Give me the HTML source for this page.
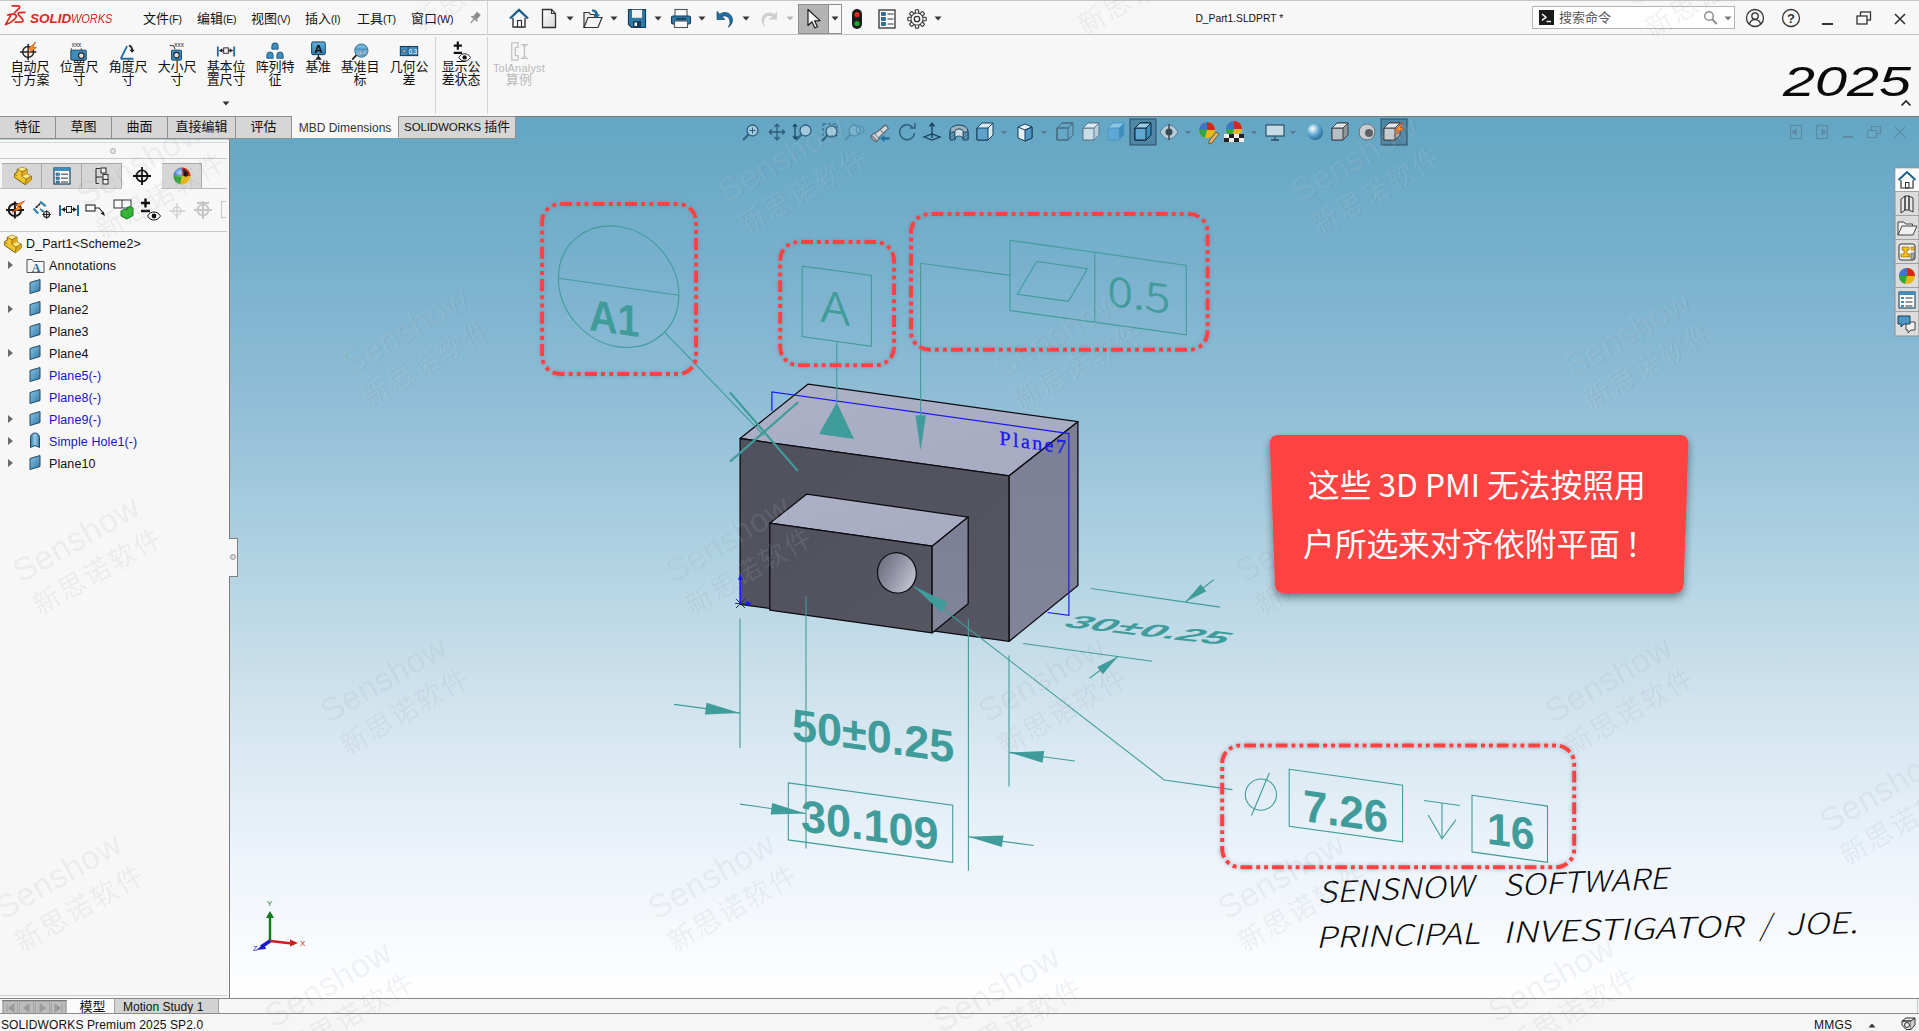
<!DOCTYPE html>
<html lang="zh-CN">
<head>
<meta charset="utf-8">
<title>D_Part1.SLDPRT - SOLIDWORKS Premium 2025</title>
<style>
*{box-sizing:border-box;margin:0;padding:0}
html,body{width:1919px;height:1031px;overflow:hidden;background:#f7f7f7}
body{position:relative;font-family:"Liberation Sans","Noto Sans CJK SC",sans-serif;font-size:12px;color:#111}
.abs{position:absolute}
.t{position:absolute;white-space:nowrap;line-height:1}
#titlebar{position:absolute;left:0;top:0;width:1919px;height:35px;background:#f7f7f7;border-top:1px solid #c6c6c6;border-bottom:1px solid #c2c2c2}
#ribbon{position:absolute;left:0;top:35px;width:1919px;height:81px;background:#f7f7f7}
.menu{position:absolute;top:11px;font-size:13px;line-height:14px;white-space:nowrap;color:#111}
.menu small{font-size:10.5px;letter-spacing:-0.2px}
.rb{position:absolute;top:60px;width:60px;margin-left:-30px;text-align:center;font-size:13px;line-height:13.4px;color:#111;letter-spacing:-0.2px}
.rb.dis{color:#b9b9b9}
.vsep{position:absolute;width:1px;background:#d2d2d2}
#tabs{position:absolute;left:0;top:116px;height:23px;width:516px;z-index:2}
.tab{position:absolute;top:0;height:23px;background:#d6d6d6;border:1px solid #8e8e8e;border-left:none;font-size:13px;line-height:20px;text-align:center;color:#111;white-space:nowrap}
.tab.act{background:#f8f8f8;border-color:#f8f8f8;border-right:1px solid #8e8e8e;font-size:12px;color:#333;line-height:23px;height:22px}
#lp{position:absolute;left:0;top:138px;width:230px;height:860px;background:#f7f7f7;border-right:1px solid #7e7e7e}
.hl{position:absolute;height:1px;background:#c9c9c9}
.ptab{position:absolute;top:25px;width:40px;height:26px;background:#d6d6d6;border:1px solid #a9a9a9;border-left:none}
.ptab.act{background:#fafafa;border-color:#fafafa}
.tree{position:absolute;left:49px;font-size:12.5px;line-height:14px;white-space:nowrap;color:#111;letter-spacing:0.1px;margin-top:1px}
.tree.bl{color:#1a10c8}
.exp{position:absolute;left:8px;width:0;height:0;border-left:5px solid #6a6a6a;border-top:4px solid transparent;border-bottom:4px solid transparent}
#vp{position:absolute;left:230px;top:116px;width:1689px;height:882px;background:linear-gradient(to bottom,#64a6c4 0%,#69a9c6 4.3%,#79b1cd 17%,#90bed6 32.2%,#afd1e2 49.3%,#d0e3ed 66.3%,#ecf3fa 83.3%,#ffffff 100%);border-top:1px solid #7b7977}
#bot{position:absolute;left:0;top:998px;width:1919px;height:33px;background:#f6f6f6;border-top:1px solid #868686}
#status{position:absolute;left:0;top:1013px;width:1919px;height:18px;background:#f6f6f6;border-top:1px solid #8c8c8c}
.wm{position:absolute;white-space:nowrap;color:rgba(255,255,255,.1);text-shadow:.9px .9px 0 rgba(40,60,80,.085);transform-origin:0 0;transform:rotate(-30deg);line-height:1;pointer-events:none}
.wm b{display:block;font:normal 400 33px/1 "Liberation Sans",sans-serif;letter-spacing:.6px}
.wm i{display:block;font:normal 400 27px/1 "Noto Sans CJK SC",sans-serif;margin:7px 0 0 0;letter-spacing:2px}
</style>
</head>
<body>

<div id="vp"></div>
<div id="titlebar">
<svg class="abs" style="left:0px;top:0px" width="30" height="34" viewBox="0 0 30 34" ><g fill="none" stroke="#da291c" stroke-width="1.7" stroke-linecap="round" stroke-linejoin="round"><path d="M12.200 4.800L18.300 4.800Q20.600 5.200 19.200 7.200L14.400 12"/><path d="M7.600 14Q12 12.600 15 13.400Q17.600 14.800 15 17.800Q11 22.200 5.500 23.600L10.800 14.400"/><path d="M24.800 11.400L19.600 11.700Q17.300 12.200 18.800 14.200L22.500 18.200Q24 20.500 21.500 21L15.200 21.200"/></g></svg>
<div class="t" style="left:30px;top:10.5px;font-size:13.5px;color:#da291c;font-style:italic;font-weight:700">SOLID</div>
<div class="t" style="left:71px;top:10.5px;font-size:13.5px;color:#da291c;font-style:italic;font-weight:400;transform:scaleX(.81);transform-origin:0 0">WORKS</div>
<div class="menu" style="left:143px">文件<small>(F)</small></div>
<div class="menu" style="left:197px">编辑<small>(E)</small></div>
<div class="menu" style="left:251px">视图<small>(V)</small></div>
<div class="menu" style="left:305px">插入<small>(I)</small></div>
<div class="menu" style="left:357px">工具<small>(T)</small></div>
<div class="menu" style="left:411px">窗口<small>(W)</small></div>
<svg class="abs" style="left:468px;top:10px" width="14" height="14" viewBox="0 0 14 14" ><g transform="rotate(40 7 7)" fill="#8a8a8a"><rect x="4.5" y="1" width="5" height="6"/><rect x="3" y="7" width="8" height="1.6"/><rect x="6.4" y="8.6" width="1.2" height="5"/></g></svg>
<div class="vsep" style="left:487px;top:0;height:34px"></div>
<svg class="abs" style="left:508px;top:6px" width="22" height="22" viewBox="0 0 22 22" ><path d="M2 11.5 L11 3 L20 11.5" fill="none" stroke="#1d5f8a" stroke-width="2.4" stroke-linejoin="miter"/><path d="M5 11v9h12v-9" fill="#fff" stroke="#333" stroke-width="1.4"/><rect x="9.5" y="13.5" width="4" height="6.5" fill="#fff" stroke="#333" stroke-width="1.2"/></svg>
<svg class="abs" style="left:540px;top:7px" width="18" height="21" viewBox="0 0 18 21" ><defs><linearGradient id="gdoc" x1="0" y1="0" x2="1" y2="1"><stop offset="0" stop-color="#fff"/><stop offset="1" stop-color="#d8d8d8"/></linearGradient></defs><path d="M2.5 1.5h9l4 4v14h-13z" fill="url(#gdoc)" stroke="#333" stroke-width="1.3"/><path d="M11.5 1.5v4h4" fill="none" stroke="#333" stroke-width="1.1"/></svg>
<svg class="abs" style="left:566px;top:15px" width="8" height="5" viewBox="0 0 8 5"><path d="M0.5 0.5h7L4 4.5z" fill="#333"/></svg>
<svg class="abs" style="left:582px;top:7px" width="22" height="21" viewBox="0 0 22 21" ><path d="M2 19.5V4.5h5l1.5 2h4.5v3" fill="#ececec" stroke="#333" stroke-width="1.2"/><path d="M2 19.5 L6 9.5 H20 L16 19.5 Z" fill="#f4f4f4" stroke="#333" stroke-width="1.2"/><path d="M10 1.5c4 0 6 2 6 5h2.2l-3.6 4-3.6-4h2.2c0-1.6-1-2.8-3.2-3z" fill="#1d6a9a"/></svg>
<svg class="abs" style="left:610px;top:15px" width="8" height="5" viewBox="0 0 8 5"><path d="M0.5 0.5h7L4 4.5z" fill="#333"/></svg>
<svg class="abs" style="left:627px;top:7px" width="20" height="21" viewBox="0 0 20 21" ><path d="M1.5 1.5h17v18h-14l-3-3z" fill="#2f79a8" stroke="#173e58" stroke-width="1.2"/><rect x="5" y="1.8" width="10" height="8" fill="#f2f2f2"/><rect x="6" y="13" width="8" height="6.2" fill="#173e58"/><rect x="7.5" y="14.5" width="2.5" height="3.5" fill="#f2f2f2"/></svg>
<svg class="abs" style="left:654px;top:15px" width="8" height="5" viewBox="0 0 8 5"><path d="M0.5 0.5h7L4 4.5z" fill="#333"/></svg>
<svg class="abs" style="left:670px;top:7px" width="22" height="21" viewBox="0 0 22 21" ><rect x="5" y="1.5" width="12" height="7" fill="#fafafa" stroke="#555" stroke-width="1.1"/><rect x="1.5" y="8" width="19" height="8" rx="1.5" fill="#2f79a8" stroke="#173e58" stroke-width="1.1"/><rect x="4.5" y="13" width="13" height="6.5" fill="#fafafa" stroke="#555" stroke-width="1.1"/><rect x="6" y="10" width="10" height="1.6" fill="#173e58"/></svg>
<svg class="abs" style="left:698px;top:15px" width="8" height="5" viewBox="0 0 8 5"><path d="M0.5 0.5h7L4 4.5z" fill="#333"/></svg>
<svg class="abs" style="left:714px;top:8px" width="22" height="20" viewBox="0 0 22 20" ><path d="M3 2.5v8h8l-3.2-3c3.6-1.6 7.8 0 8.2 5.2 0.2 2.2-0.8 4.2-2 5.6 4.2-2.2 5.6-7.2 3.6-10.8C15.4 3.4 10 2.2 5.8 5.2z" fill="#1f6fa3" stroke="#14405e" stroke-width=".7"/></svg>
<svg class="abs" style="left:742px;top:15px" width="8" height="5" viewBox="0 0 8 5"><path d="M0.5 0.5h7L4 4.5z" fill="#333"/></svg>
<svg class="abs" style="left:758px;top:8px" width="22" height="20" viewBox="0 0 22 20" ><g transform="translate(22 0) scale(-1 1)"><path d="M3 2.5v8h8l-3.2-3c3.6-1.6 7.8 0 8.2 5.2 0.2 2.2-0.8 4.2-2 5.6 4.2-2.2 5.6-7.2 3.6-10.8C15.4 3.4 10 2.2 5.8 5.2z" fill="#cfcfcf"/></g></svg>
<svg class="abs" style="left:786px;top:15px" width="8" height="5" viewBox="0 0 8 5"><path d="M0.5 0.5h7L4 4.5z" fill="#b5b5b5"/></svg>
<div class="abs" style="left:798px;top:3px;width:44px;height:30px;border:1px solid #8f8f8f;background:#f7f7f7"></div>
<div class="abs" style="left:798px;top:3px;width:31px;height:30px;border:1px solid #8f8f8f;background:#b3b3b3"></div>
<svg class="abs" style="left:806px;top:7px" width="16" height="22" viewBox="0 0 16 22" ><path d="M2 1.5 L2 17.5 L6 13.8 L8.8 20 L11.4 18.8 L8.6 12.8 L14 12.6 Z" fill="#fdfdfd" stroke="#1a1a1a" stroke-width="1.2" stroke-linejoin="round"/></svg>
<svg class="abs" style="left:831px;top:15px" width="8" height="5" viewBox="0 0 8 5"><path d="M0.5 0.5h7L4 4.5z" fill="#333"/></svg>
<svg class="abs" style="left:851px;top:7px" width="12" height="22" viewBox="0 0 12 22" ><rect x="1" y="1" width="10" height="20" rx="5" fill="#1c1c1c"/><circle cx="6" cy="6.5" r="2.6" fill="#e02a1c"/><circle cx="6" cy="15.5" r="2.6" fill="#25a52c"/></svg>
<svg class="abs" style="left:878px;top:8px" width="18" height="20" viewBox="0 0 18 20" ><rect x="1" y="1" width="16" height="18" fill="#fbfbfb" stroke="#333" stroke-width="1.3"/><g fill="#1f6fa3" stroke="#14405e" stroke-width=".6"><rect x="3.5" y="3.5" width="4" height="3"/><rect x="3.5" y="8.5" width="4" height="3"/><rect x="3.5" y="13.5" width="4" height="3"/></g><g stroke="#333" stroke-width="1.2"><path d="M9.5 5h6M9.5 10h6M9.5 15h6"/></g></svg>
<svg class="abs" style="left:907px;top:8px" width="20" height="20" viewBox="0 0 20 20" ><g transform="translate(10 10)"><circle r="6.2" fill="none" stroke="#333" stroke-width="1.3"/><circle r="2.7" fill="none" stroke="#333" stroke-width="1.3"/><rect x="-1.7" y="-9.2" width="3.4" height="3.4" rx=".8" fill="#f7f7f7" stroke="#333" stroke-width="1.1" transform="rotate(0)"/><rect x="-1.7" y="-9.2" width="3.4" height="3.4" rx=".8" fill="#f7f7f7" stroke="#333" stroke-width="1.1" transform="rotate(45)"/><rect x="-1.7" y="-9.2" width="3.4" height="3.4" rx=".8" fill="#f7f7f7" stroke="#333" stroke-width="1.1" transform="rotate(90)"/><rect x="-1.7" y="-9.2" width="3.4" height="3.4" rx=".8" fill="#f7f7f7" stroke="#333" stroke-width="1.1" transform="rotate(135)"/><rect x="-1.7" y="-9.2" width="3.4" height="3.4" rx=".8" fill="#f7f7f7" stroke="#333" stroke-width="1.1" transform="rotate(180)"/><rect x="-1.7" y="-9.2" width="3.4" height="3.4" rx=".8" fill="#f7f7f7" stroke="#333" stroke-width="1.1" transform="rotate(225)"/><rect x="-1.7" y="-9.2" width="3.4" height="3.4" rx=".8" fill="#f7f7f7" stroke="#333" stroke-width="1.1" transform="rotate(270)"/><rect x="-1.7" y="-9.2" width="3.4" height="3.4" rx=".8" fill="#f7f7f7" stroke="#333" stroke-width="1.1" transform="rotate(315)"/><circle r="5.5" fill="#f7f7f7"/><circle r="2.7" fill="none" stroke="#333" stroke-width="1.3"/></g></svg>
<svg class="abs" style="left:934px;top:15px" width="8" height="5" viewBox="0 0 8 5"><path d="M0.5 0.5h7L4 4.5z" fill="#333"/></svg>
<div class="t" style="left:1195.4px;top:12.5px;font-size:10.3px;color:#111">D_Part1.SLDPRT *</div>
<div class="abs" style="left:1532px;top:5px;width:203px;height:23px;background:#fff;border:1px solid #b4b4b4"></div>
<svg class="abs" style="left:1539px;top:9px" width="15" height="15" viewBox="0 0 15 15" ><rect width="15" height="15" fill="#1b1b1b"/><path d="M3 4l4 3.2L3 10.4" fill="none" stroke="#fff" stroke-width="1.4"/><path d="M7.5 11.5h4.5" stroke="#fff" stroke-width="1.4"/></svg>
<div class="t" style="left:1559px;top:10px;font-size:13px;color:#5a5a5a">搜索命令</div>
<svg class="abs" style="left:1703px;top:9px" width="16" height="16" viewBox="0 0 16 16" ><circle cx="6" cy="6" r="4.3" fill="none" stroke="#8e8e8e" stroke-width="1.5"/><path d="M9.2 9.2l4.6 4.8" stroke="#8e8e8e" stroke-width="2"/></svg>
<svg class="abs" style="left:1724px;top:15px" width="8" height="5" viewBox="0 0 8 5"><path d="M0.5 0.5h7L4 4.5z" fill="#777"/></svg>
<svg class="abs" style="left:1745px;top:7px" width="20" height="20" viewBox="0 0 20 20" ><circle cx="10" cy="10" r="8.5" fill="none" stroke="#333" stroke-width="1.3"/><circle cx="10" cy="8" r="3.2" fill="none" stroke="#333" stroke-width="1.3"/><path d="M4.4 16c.8-3 3-4.4 5.6-4.4s4.8 1.400 5.600 4.400" fill="none" stroke="#333" stroke-width="1.3"/></svg>
<svg class="abs" style="left:1781px;top:7px" width="20" height="20" viewBox="0 0 20 20" ><circle cx="10" cy="10" r="8.5" fill="none" stroke="#333" stroke-width="1.3"/><text x="10" y="14.6" text-anchor="middle" font-family="Liberation Sans,sans-serif" font-size="13" font-weight="700" fill="#333">?</text></svg>
<div class="abs" style="left:1822px;top:22px;width:11px;height:2px;background:#333"></div>
<svg class="abs" style="left:1856px;top:10px" width="16" height="14" viewBox="0 0 16 14" ><rect x="4.500" y="1" width="10" height="8" fill="none" stroke="#333" stroke-width="1.300"/><rect x="1" y="5" width="10" height="8" fill="#f7f7f7" stroke="#333" stroke-width="1.300"/></svg>
<svg class="abs" style="left:1894px;top:12px" width="12" height="12" viewBox="0 0 12 12" ><path d="M1 1l10 10M11 1L1 11" stroke="#333" stroke-width="1.600"/></svg>
</div>
<div id="ribbon">
<div class="vsep" style="left:435px;top:2px;height:77px"></div>
<div class="vsep" style="left:487px;top:2px;height:77px"></div>
</div>
<svg class="abs" style="left:20px;top:40.5px" width="20" height="21" viewBox="0 0 22 23" ><circle cx="9" cy="12" r="6" fill="none" stroke="#222" stroke-width="1.6"/><path d="M9 3v18M0 12h18" stroke="#222" stroke-width="1.600"/><path d="M17 1l-8 8h4l-5 6 10-8h-4z" fill="#f7a21a" stroke="#d4411a" stroke-width=".8"/></svg>
<svg class="abs" style="left:69px;top:40.5px" width="20" height="21" viewBox="0 0 22 23" ><text x="3" y="6" font-size="7" font-family="Liberation Sans,sans-serif" fill="#222">xxx</text><path d="M2.500 8v6M13.500 8v8" stroke="#222" stroke-width="1"/><rect x="2" y="10" width="17" height="11" rx="1" fill="#3d8dbd" stroke="#14405e" stroke-width="1"/><circle cx="13.500" cy="16" r="3" fill="#e8e8e8" stroke="#222" stroke-width="1.200"/></svg>
<svg class="abs" style="left:118px;top:40.5px" width="20" height="21" viewBox="0 0 22 23" ><path d="M3 19.500L10 5.500M3 19.500h14" fill="none" stroke="#1f6f9f" stroke-width="2"/><path d="M12 4c3 .5 4.500 2.500 4.500 5.500h2l-3 3.500-3-3.500h2c0-1.500-.8-2.800-2.500-3.500z" fill="#222"/></svg>
<svg class="abs" style="left:167px;top:40.5px" width="20" height="21" viewBox="0 0 22 23" ><text x="8" y="6" font-size="7" font-family="Liberation Sans,sans-serif" fill="#222">xxx</text><path d="M3 5h4l2 4" fill="none" stroke="#222" stroke-width="1"/><rect x="5" y="10" width="11" height="11" rx="1" fill="#3d8dbd" stroke="#14405e" stroke-width="1"/><circle cx="10.500" cy="15.500" r="3" fill="#e0e0e0" stroke="#222" stroke-width="1.200"/></svg>
<svg class="abs" style="left:216px;top:40.5px" width="20" height="21" viewBox="0 0 22 23" ><path d="M2 6v11M20 6v11" stroke="#1f6f9f" stroke-width="2"/><path d="M3.500 10.500h15" stroke="#222" stroke-width="1.200"/><path d="M3.500 10.500l3.500-2.500v5zM18.500 10.500l-3.500-2.500v5z" fill="#222"/><rect x="8.500" y="7.500" width="5" height="6" fill="#f0f0f0" stroke="#222" stroke-width="1"/></svg>
<svg class="abs" style="left:265px;top:40.5px" width="20" height="21" viewBox="0 0 22 23" ><g fill="#3d8dbd" stroke="#14405e" stroke-width=".8"><path d="M7.500 9v-3.500a3.500 3.500 0 0 1 7 0V9z"/><path d="M2 19v-3.500a3.500 3.500 0 0 1 7 0V19z"/><path d="M13 19v-3.500a3.500 3.500 0 0 1 7 0V19z"/></g></svg>
<svg class="abs" style="left:308px;top:40.5px" width="20" height="21" viewBox="0 0 22 23" ><defs><linearGradient id="gA" x1="0" y1="0" x2="0" y2="1"><stop offset="0" stop-color="#62b0dc"/><stop offset="1" stop-color="#2f83b4"/></linearGradient></defs><rect x="4" y="1" width="15" height="14" rx="1.500" fill="url(#gA)" stroke="#14405e" stroke-width="1.100"/><text x="11.500" y="13" text-anchor="middle" font-size="13" font-weight="700" font-family="Liberation Sans,sans-serif" fill="#111">A</text><path d="M11.500 15v1.500" stroke="#222" stroke-width="1.200"/><path d="M7.800 20.500l3.700-4.500 3.700 4.500z" fill="#222"/></svg>
<svg class="abs" style="left:350px;top:40.5px" width="20" height="21" viewBox="0 0 22 23" ><circle cx="12.500" cy="10.500" r="7.300" fill="#6cb2da" stroke="#2a6c94" stroke-width="1"/><path d="M5.500 9h14" stroke="#2a6c94" stroke-width=".7"/><text x="12.500" y="15.500" text-anchor="middle" font-size="7.500" font-weight="700" font-family="Liberation Sans,sans-serif" fill="#fff" stroke="#173e58" stroke-width=".3">A1</text><path d="M7 15.500l-4.500 5" stroke="#222" stroke-width="2"/></svg>
<svg class="abs" style="left:399px;top:40.5px" width="20" height="21" viewBox="0 0 22 23" ><rect x="1.500" y="6" width="19" height="10" fill="#3d8dbd" stroke="#14405e" stroke-width="1.200"/><path d="M10 6v10" stroke="#14405e" stroke-width="1"/><path d="M3.500 12a2.200 2.200 0 0 1 4.400 0z" fill="#e8e8e8" stroke="#222" stroke-width=".6"/><text x="15.300" y="14" text-anchor="middle" font-size="7" font-family="Liberation Sans,sans-serif" fill="#fff">0.3</text></svg>
<svg class="abs" style="left:451px;top:40.5px" width="20" height="21" viewBox="0 0 22 23" ><path d="M3 5h9M7.500 .5v9M3 13h9" stroke="#111" stroke-width="2.400"/><path d="M8.500 18c2-3 4-4 6.500-4s4.500 1 6.500 4c-2 3-4 4-6.500 4s-4.500-1-6.500-4z" fill="#fff" stroke="#111" stroke-width="1"/><circle cx="15" cy="18" r="2.400" fill="#111"/></svg>
<svg class="abs" style="left:509px;top:40.5px" width="20" height="21" viewBox="0 0 22 23" ><g fill="none" stroke="#c4c4c4" stroke-width="1.500"><path d="M3 2h7v5h-3v9h3v5H3zM13 4h8M13 19h8M17 5v13"/></g><path d="M17 3l-2 3h4zM17 20l-2-3h4z" fill="#c4c4c4"/></svg>
<div class="rb" style="left:30px">自动尺<br>寸方案</div>
<div class="rb" style="left:79px">位置尺<br>寸</div>
<div class="rb" style="left:128px">角度尺<br>寸</div>
<div class="rb" style="left:177px">大小尺<br>寸</div>
<div class="rb" style="left:226px">基本位<br>置尺寸</div>
<div class="rb" style="left:275px">阵列特<br>征</div>
<div class="rb" style="left:318px">基准</div>
<div class="rb" style="left:360px">基准目<br>标</div>
<div class="rb" style="left:409px">几何公<br>差</div>
<div class="rb" style="left:461px">显示公<br>差状态</div>
<div class="rb dis" style="left:519px;top:62px;font-size:11px;line-height:12px;letter-spacing:.2px">TolAnalyst<br><span style="font-size:13px">算例</span></div>
<svg class="abs" style="left:222px;top:101px" width="8" height="5" viewBox="0 0 8 5"><path d="M0.5 0.5h7L4 4.5z" fill="#333"/></svg>
<svg class="abs" style="left:1775px;top:55px" width="144" height="50" viewBox="0 0 144 50" ><text x="8" y="41" font-family="Liberation Sans,sans-serif" font-style="italic" font-size="43" textLength="128" lengthAdjust="spacingAndGlyphs" fill="#0a0a0a">2025</text></svg>
<svg class="abs" style="left:1900px;top:99px" width="12" height="8" viewBox="0 0 12 8" ><path d="M1.500 6.500L6 2l4.500 4.500" fill="none" stroke="#222" stroke-width="1.600"/></svg>
<div id="tabs">
<div class="tab" style="left:0px;width:56px">特征</div>
<div class="tab" style="left:56px;width:56px">草图</div>
<div class="tab" style="left:112px;width:56px">曲面</div>
<div class="tab" style="left:168px;width:68px">直接编辑</div>
<div class="tab" style="left:236px;width:56px">评估</div>
<div class="tab act" style="left:292px;width:107px">MBD Dimensions</div>
<div class="tab" style="left:399px;width:117px;font-size:11.5px;letter-spacing:-.1px">SOLIDWORKS <span style="font-size:13px">插件</span></div>
</div>
<div id="lp">
<div class="hl" style="left:0;top:1px;width:229px;background:#b4ccd2"></div>
<div class="hl" style="left:0;top:4px;width:227px;background:#d4d4d4"></div>
<div class="abs" style="left:110px;top:10px;width:6px;height:6px;border-radius:50%;border:1px solid #b0b0b0;background:#e6e6e6"></div>
<div class="hl" style="left:0;top:20px;width:227px"></div>
<div class="ptab" style="left:2px"></div>
<div class="ptab" style="left:42px"></div>
<div class="ptab" style="left:82px"></div>
<div class="ptab act" style="left:122px"></div>
<div class="ptab" style="left:162px"></div>
<div class="hl" style="left:0;top:50px;width:227px;background:#bdbdbd"></div>
<div class="abs" style="left:122px;top:26px;width:39px;height:26px;background:#fafafa"></div>
<svg class="abs" style="left:14px;top:28px" width="20" height="20" viewBox="0 0 20 20" ><path d="M8.400 1.300L13 3.300V8L17.200 10V14L11.300 18.700L0.300 11.200V8L3.200 6.100V3.300z" fill="#f0c42c" stroke="#7a5c0c" stroke-width="1" stroke-linejoin="round"/><path d="M3.200 3.300L8.400 1.300L13 3.300L8 5.600z" fill="#fbe88a"/><path d="M8 10.500L13 8L17.200 10L12 13z" fill="#fbe88a"/><path d="M12 13L17.200 10V14L11.300 18.700z" fill="#dca81c"/><path d="M8 5.600L13 3.300V8L8 10.500z" fill="#dca81c"/><path d="M3.200 3.300L8 5.600V10.500L12 13L11.300 18.700M8 5.600L13 3.300M12 13L17.200 10M0.300 8L3.200 9.800" fill="none" stroke="#7a5c0c" stroke-width=".7"/></svg>
<svg class="abs" style="left:53px;top:29px" width="18" height="18" viewBox="0 0 18 18" ><rect x="1" y="1" width="16" height="16" fill="#fbfbfb" stroke="#14405e" stroke-width="1.200"/><rect x="1" y="1" width="16" height="3" fill="#3d8dbd"/><g fill="#3d8dbd" stroke="#14405e" stroke-width=".5"><rect x="3" y="6" width="3.500" height="2.500"/><rect x="3" y="10" width="3.500" height="2.500"/><rect x="3" y="14" width="3.500" height="2"/></g><path d="M8 7.200h7M8 11.200h7M8 15h7" stroke="#333" stroke-width="1"/></svg>
<svg class="abs" style="left:93px;top:29px" width="18" height="18" viewBox="0 0 18 18" ><g fill="#f4f4f4" stroke="#333" stroke-width="1.100"><path d="M3 1.500h4M3 1.500v15M3 16.500h3"/><rect x="8" y="1" width="5" height="5"/><rect x="10" y="7.500" width="5" height="5"/><rect x="10" y="12.500" width="5" height="4.500"/><path d="M3 10h7" /></g></svg>
<svg class="abs" style="left:132px;top:28px" width="20" height="20" viewBox="0 0 20 20" ><circle cx="10" cy="10" r="5.600" fill="none" stroke="#111" stroke-width="1.800"/><path d="M10 1v18M1 10h18" stroke="#111" stroke-width="1.800"/></svg>
<svg class="abs" style="left:172px;top:28px" width="20" height="20" viewBox="0 0 20 20" ><defs><radialGradient id="bg1" cx=".35" cy=".3" r=".8"><stop offset="0" stop-color="#fff" stop-opacity=".7"/><stop offset=".4" stop-color="#fff" stop-opacity="0"/></radialGradient></defs><circle cx="10" cy="10" r="8.500" fill="#e8b81a"/><path d="M10 10L1.500 10A8.500 8.500 0 0 1 10 1.500z" fill="#3a78d0"/><path d="M10 10V1.500A8.500 8.500 0 0 1 18.500 10z" fill="#d02a1a"/><path d="M10 10H1.500A8.500 8.500 0 0 0 8 18.300z" fill="#32a83a"/><ellipse cx="13" cy="7" rx="2.300" ry="4" fill="#111" transform="rotate(-30 13 7)"/><circle cx="10" cy="10" r="8.500" fill="url(#bg1)"/></svg>
<div class="hl" style="left:0;top:93px;width:227px"></div>
<svg class="abs" style="left:5px;top:61px" width="22" height="22" viewBox="0 0 22 22" ><circle cx="9.900" cy="10.900" r="6.200" fill="none" stroke="#1a1a1a" stroke-width="2"/><path d="M1 10.900h18M9.900 2.500v17" stroke="#1a1a1a" stroke-width="2"/><path d="M19.500 2L10.500 6.200L13.800 7.600L7 13.200L16.800 9.300L13.600 7.900z" fill="#f9b21a" stroke="#d8401a" stroke-width=".9" stroke-linejoin="round"/></svg>
<svg class="abs" style="left:31px;top:61px" width="22" height="22" viewBox="0 0 22 22" ><path d="M9 2.500L14.700 7.100M2.500 9.500L7.200 14.600" stroke="#2f7fae" stroke-width="2.200"/><path d="M5.200 8.300L8.800 5" stroke="#222" stroke-width="1.100"/><path d="M4.300 9.200l.7-2.600 1.700 1.800zM9.700 4.100l-2.500.8 1.700 1.800z" fill="#222"/><path d="M9 9.800l2.800 2.300" stroke="#2f7fae" stroke-width="1.600"/><path d="M13.400 13.400l-3.300-.6 2.200-2.400z" fill="#2f7fae"/><circle cx="15.600" cy="15.500" r="3" fill="none" stroke="#222" stroke-width="1.100"/><path d="M15.600 11.300v8.400M11.400 15.500h8.400" stroke="#222" stroke-width="1.100"/></svg>
<svg class="abs" style="left:58px;top:61px" width="22" height="22" viewBox="0 0 22 22" ><path d="M2 6v11M20 6v11" stroke="#1f6f9f" stroke-width="2"/><path d="M3.500 10.500h15" stroke="#222" stroke-width="1.200"/><path d="M3.500 10.500l3.500-2.500v5zM18.500 10.500l-3.500-2.500v5z" fill="#222"/><rect x="8.500" y="7.500" width="5" height="6" fill="#f0f0f0" stroke="#222" stroke-width="1"/></svg>
<svg class="abs" style="left:84px;top:61px" width="22" height="22" viewBox="0 0 22 22" ><rect x="2" y="6" width="9" height="6" fill="#fafafa" stroke="#222" stroke-width="1.100"/><path d="M11 9h4l5 6" fill="none" stroke="#222" stroke-width="1.100"/><path d="M21 17l-4.500-2.500 3-2z" fill="#222"/></svg>
<svg class="abs" style="left:112px;top:59px" width="24" height="24" viewBox="0 0 24 24" ><rect x="2" y="3" width="17" height="8" fill="#fafafa" stroke="#333" stroke-width="1"/><path d="M10 3v8" stroke="#333" stroke-width="1"/><path d="M9 14l4-2 2 1v-2.500l3-1 3 1.500v7.500l-6 3.500-6-3z" fill="#2fb52f" stroke="#14701a" stroke-width="1"/></svg>
<svg class="abs" style="left:139px;top:60px" width="24" height="24" viewBox="0 0 24 24" ><path d="M2 5h9M6.500 .5v9M2 13h9" stroke="#111" stroke-width="2.400"/><path d="M8.500 18c2-3 4-4 6.500-4s4.500 1 6.500 4c-2 3-4 4-6.500 4s-4.500-1-6.500-4z" fill="#fff" stroke="#111" stroke-width="1"/><circle cx="15" cy="18" r="2.400" fill="#111"/></svg>
<svg class="abs" style="left:167px;top:62px" width="20" height="20" viewBox="0 0 20 20" ><g stroke="#d0d0d0" fill="none" stroke-width="1.300"><circle cx="10" cy="11" r="4"/><path d="M10 3v16M2 11h16"/></g></svg>
<svg class="abs" style="left:192px;top:60px" width="22" height="22" viewBox="0 0 22 22" ><g stroke="#c6c6c6" fill="none" stroke-width="2"><circle cx="11" cy="12" r="5.500"/><path d="M11 3v18M2 12h18"/><path d="M5 5h12" /></g></svg>
<div class="abs" style="left:221px;top:63px;width:5px;height:17px;border:1.500px solid #c6c6c6;border-right:none"></div>
<div class="hl" style="left:0;top:857px;width:227px;background:#d0d0d0"></div>
<svg class="abs" style="left:4px;top:96px" width="20" height="20" viewBox="0 0 20 20" ><path d="M8.400 1.300L13 3.300V8L17.200 10V14L11.300 18.700L0.300 11.200V8L3.200 6.100V3.300z" fill="#f0c42c" stroke="#7a5c0c" stroke-width="1" stroke-linejoin="round"/><path d="M3.200 3.300L8.400 1.300L13 3.300L8 5.600z" fill="#fbe88a"/><path d="M8 10.500L13 8L17.200 10L12 13z" fill="#fbe88a"/><path d="M12 13L17.200 10V14L11.300 18.700z" fill="#dca81c"/><path d="M8 5.600L13 3.300V8L8 10.500z" fill="#dca81c"/><path d="M3.200 3.300L8 5.600V10.500L12 13L11.300 18.700M8 5.600L13 3.300M12 13L17.200 10M0.300 8L3.200 9.800" fill="none" stroke="#7a5c0c" stroke-width=".7"/></svg>
<div class="tree" style="left:26px;top:98px;letter-spacing:.1px">D_Part1&lt;Scheme2&gt;</div>
<div class="exp" style="top:123px"></div>
<svg class="abs" style="left:26px;top:118px" width="20" height="18" viewBox="0 0 20 18" ><path d="M1 16.500V3.500h5l1.500 2H18v11z" fill="#f4f4f4" stroke="#555" stroke-width="1"/><text x="10" y="15.500" text-anchor="middle" font-family="Liberation Serif,serif" font-weight="700" font-size="12" fill="#2a6c9c">A</text></svg>
<div class="tree" style="top:120px">Annotations</div>
<svg class="abs" style="left:28px;top:140px" width="14" height="17" viewBox="0 0 14 17" ><defs><linearGradient id="pg1" x1="0" y1="0" x2="1" y2="1"><stop offset="0" stop-color="#8cc4e4"/><stop offset="1" stop-color="#2f79a8"/></linearGradient></defs><path d="M2 4.500L12 1.500v11L2 15.500z" fill="url(#pg1)" stroke="#1b4a69" stroke-width="1"/></svg>
<div class="tree" style="top:142px">Plane1</div>
<div class="exp" style="top:167px"></div>
<svg class="abs" style="left:28px;top:162px" width="14" height="17" viewBox="0 0 14 17" ><defs><linearGradient id="pg2" x1="0" y1="0" x2="1" y2="1"><stop offset="0" stop-color="#8cc4e4"/><stop offset="1" stop-color="#2f79a8"/></linearGradient></defs><path d="M2 4.500L12 1.500v11L2 15.500z" fill="url(#pg2)" stroke="#1b4a69" stroke-width="1"/></svg>
<div class="tree" style="top:164px">Plane2</div>
<svg class="abs" style="left:28px;top:184px" width="14" height="17" viewBox="0 0 14 17" ><defs><linearGradient id="pg3" x1="0" y1="0" x2="1" y2="1"><stop offset="0" stop-color="#8cc4e4"/><stop offset="1" stop-color="#2f79a8"/></linearGradient></defs><path d="M2 4.500L12 1.500v11L2 15.500z" fill="url(#pg3)" stroke="#1b4a69" stroke-width="1"/></svg>
<div class="tree" style="top:186px">Plane3</div>
<div class="exp" style="top:211px"></div>
<svg class="abs" style="left:28px;top:206px" width="14" height="17" viewBox="0 0 14 17" ><defs><linearGradient id="pg4" x1="0" y1="0" x2="1" y2="1"><stop offset="0" stop-color="#8cc4e4"/><stop offset="1" stop-color="#2f79a8"/></linearGradient></defs><path d="M2 4.500L12 1.500v11L2 15.500z" fill="url(#pg4)" stroke="#1b4a69" stroke-width="1"/></svg>
<div class="tree" style="top:208px">Plane4</div>
<svg class="abs" style="left:28px;top:228px" width="14" height="17" viewBox="0 0 14 17" ><defs><linearGradient id="pg5" x1="0" y1="0" x2="1" y2="1"><stop offset="0" stop-color="#8cc4e4"/><stop offset="1" stop-color="#2f79a8"/></linearGradient></defs><path d="M2 4.500L12 1.500v11L2 15.500z" fill="url(#pg5)" stroke="#1b4a69" stroke-width="1"/></svg>
<div class="tree bl" style="top:230px">Plane5(-)</div>
<svg class="abs" style="left:28px;top:250px" width="14" height="17" viewBox="0 0 14 17" ><defs><linearGradient id="pg6" x1="0" y1="0" x2="1" y2="1"><stop offset="0" stop-color="#8cc4e4"/><stop offset="1" stop-color="#2f79a8"/></linearGradient></defs><path d="M2 4.500L12 1.500v11L2 15.500z" fill="url(#pg6)" stroke="#1b4a69" stroke-width="1"/></svg>
<div class="tree bl" style="top:252px">Plane8(-)</div>
<div class="exp" style="top:277px"></div>
<svg class="abs" style="left:28px;top:272px" width="14" height="17" viewBox="0 0 14 17" ><defs><linearGradient id="pg7" x1="0" y1="0" x2="1" y2="1"><stop offset="0" stop-color="#8cc4e4"/><stop offset="1" stop-color="#2f79a8"/></linearGradient></defs><path d="M2 4.500L12 1.500v11L2 15.500z" fill="url(#pg7)" stroke="#1b4a69" stroke-width="1"/></svg>
<div class="tree bl" style="top:274px">Plane9(-)</div>
<div class="exp" style="top:299px"></div>
<svg class="abs" style="left:28px;top:294px" width="14" height="17" viewBox="0 0 14 17" ><defs><linearGradient id="hg" x1="0" y1="0" x2="1" y2="0"><stop offset="0" stop-color="#2f79a8"/><stop offset=".5" stop-color="#9ccdea"/><stop offset="1" stop-color="#2f79a8"/></linearGradient></defs><path d="M2.500 15.500V5.500a4.500 4.500 0 0 1 9 0v10l-4.500-2z" fill="url(#hg)" stroke="#1b4a69" stroke-width="1"/></svg>
<div class="tree bl" style="top:296px">Simple Hole1(-)</div>
<div class="exp" style="top:321px"></div>
<svg class="abs" style="left:28px;top:316px" width="14" height="17" viewBox="0 0 14 17" ><defs><linearGradient id="pg9" x1="0" y1="0" x2="1" y2="1"><stop offset="0" stop-color="#8cc4e4"/><stop offset="1" stop-color="#2f79a8"/></linearGradient></defs><path d="M2 4.500L12 1.500v11L2 15.500z" fill="url(#pg9)" stroke="#1b4a69" stroke-width="1"/></svg>
<div class="tree" style="top:318px">Plane10</div>
</div>
<div class="abs" style="left:229px;top:538px;width:9px;height:39px;background:#f7f7f7;border:1px solid #808080;border-left:none"></div>
<div class="abs" style="left:230px;top:554px;width:6px;height:6px;border:1px solid #9a9a9a;background:#dcdcdc;border-radius:50%"></div>
<div id="bot">
<div class="abs" style="left:2px;top:1px;width:65px;height:15px;background:#b9b9b9;border-top:1px solid #7a7a7a"></div>
<div class="abs" style="left:3px;top:2px;width:15px;height:14px;border:1px solid #a6a6a6;background:#bcbcbc"></div>
<div class="abs" style="left:19px;top:2px;width:15px;height:14px;border:1px solid #a6a6a6;background:#bcbcbc"></div>
<div class="abs" style="left:35px;top:2px;width:15px;height:14px;border:1px solid #a6a6a6;background:#bcbcbc"></div>
<div class="abs" style="left:51px;top:2px;width:15px;height:14px;border:1px solid #a6a6a6;background:#bcbcbc"></div>
<svg class="abs" style="left:3px;top:2px" width="15" height="14" viewBox="0 0 15 14" ><path d="M4 3v8M11 3L5.500 7l5.500 4z" fill="#9a9a9a" stroke="#9a9a9a" stroke-width="1"/></svg>
<svg class="abs" style="left:19px;top:2px" width="15" height="14" viewBox="0 0 15 14" ><path d="M10 3L4.500 7l5.500 4z" fill="#9a9a9a" stroke="#9a9a9a" stroke-width="1"/></svg>
<svg class="abs" style="left:35px;top:2px" width="15" height="14" viewBox="0 0 15 14" ><path d="M5 3l5.500 4L5 11z" fill="#9a9a9a" stroke="#9a9a9a" stroke-width="1"/></svg>
<svg class="abs" style="left:51px;top:2px" width="15" height="14" viewBox="0 0 15 14" ><path d="M11 3v8M4 3l5.500 4L4 11z" fill="#9a9a9a" stroke="#9a9a9a" stroke-width="1"/></svg>
<div class="abs" style="left:67px;top:0;width:47px;height:16px;background:#fbfbfb;padding-left:12.5px;font-size:13px;line-height:16px">模型</div>
<div class="abs" style="left:114px;top:0;width:105px;height:16px;background:#d3d3d3;border:1px solid #a3a3a3;border-top:none;padding-left:8px;font-size:12px;line-height:16px;letter-spacing:.02px">Motion Study 1</div>
<div class="abs" style="left:1917px;top:0;width:1px;height:15px;background:#b9c9d0"></div>
</div>
<div id="status">
<div class="t" style="left:1px;top:5px;font-size:12px;letter-spacing:.12px">SOLIDWORKS Premium 2025 SP2.0</div>
<div class="t" style="left:1814px;top:5px;font-size:12px;letter-spacing:.2px">MMGS</div>
<svg class="abs" style="left:1867.5px;top:8.5px" width="8" height="5" viewBox="0 0 8 5" ><path d="M0.500 4.500h7L4 .5z" fill="#333"/></svg>
<svg class="abs" style="left:1900px;top:2px" width="17" height="15" viewBox="0 0 17 15" ><path d="M2 5l4-3h9l-4 3zM2 5v4l4 4.500h5V5z" fill="#e8e8e8" stroke="#333" stroke-width="1"/><circle cx="7" cy="9" r="2.500" fill="none" stroke="#333" stroke-width="1"/><path d="M11 5l4-3v7l-4 4.500" fill="#cfcfcf" stroke="#333" stroke-width="1"/></svg>
</div>
<svg class="abs" style="left:0;top:0" width="1919" height="1031" viewBox="0 0 1919 1031">
<defs>
<linearGradient id="gTop" x1="0" y1="0" x2="1" y2="1"><stop offset="0" stop-color="#adb1c7"/><stop offset="1" stop-color="#a6abc1"/></linearGradient>
<linearGradient id="gFront" x1="0" y1="0" x2="1" y2="1"><stop offset="0" stop-color="#50515d"/><stop offset="1" stop-color="#555662"/></linearGradient>
<linearGradient id="gRight" x1="0" y1="0" x2="0" y2="1"><stop offset="0" stop-color="#7c7f95"/><stop offset="1" stop-color="#82859a"/></linearGradient>
<linearGradient id="gHole" x1="0" y1="0" x2="1" y2="1"><stop offset="0" stop-color="#62646f"/><stop offset=".45" stop-color="#8f91a2"/><stop offset=".8" stop-color="#b9bbc9"/><stop offset="1" stop-color="#8c8ea0"/></linearGradient>
<filter id="glow" x="-10%" y="-10%" width="120%" height="120%"><feGaussianBlur in="SourceAlpha" stdDeviation="2"/><feComponentTransfer><feFuncR type="linear" slope="0" intercept=".12"/><feFuncG type="linear" slope="0" intercept=".25"/><feFuncB type="linear" slope="0" intercept=".35"/><feFuncA type="linear" slope=".7"/></feComponentTransfer><feMerge><feMergeNode/><feMergeNode in="SourceGraphic"/></feMerge></filter>
<filter id="shadow" x="-10%" y="-20%" width="120%" height="150%"><feGaussianBlur in="SourceAlpha" stdDeviation="4"/><feOffset dx="0" dy="4"/><feComponentTransfer><feFuncA type="linear" slope=".45"/></feComponentTransfer><feMerge><feMergeNode/><feMergeNode in="SourceGraphic"/></feMerge></filter>
</defs>
<polygon points="740.1,438.5 808.2,384.1 1077.9,421.7 1009.2,475.8" fill="url(#gTop)" stroke="#0c0c10" stroke-width="1.3" stroke-linejoin="round"/>
<polygon points="740.1,438.5 1009.2,475.8 1009.2,641.3 740.1,604.4" fill="url(#gFront)" stroke="#0c0c10" stroke-width="1.3" stroke-linejoin="round"/>
<polygon points="1009.2,475.8 1077.9,421.7 1077.9,585.5 1009.2,641.3" fill="url(#gRight)" stroke="#0c0c10" stroke-width="1.3" stroke-linejoin="round"/>
<polygon points="769.8,523.2 806.8,494.1 968.2,517.1 932.1,546.2" fill="url(#gTop)" stroke="#0c0c10" stroke-width="1.3" stroke-linejoin="round"/>
<polygon points="769.8,523.2 932.1,546.2 932.1,632.9 769.8,610.2" fill="url(#gFront)" stroke="#0c0c10" stroke-width="1.3" stroke-linejoin="round"/>
<polygon points="932.1,546.2 968.2,517.1 968.2,603.8 932.1,632.9" fill="url(#gRight)" stroke="#0c0c10" stroke-width="1.3" stroke-linejoin="round"/>
<ellipse cx="896.9" cy="572.9" rx="19.3" ry="20.3" transform="rotate(-15 896.9 572.9)" fill="url(#gHole)" stroke="#0c0c10" stroke-width="1.2"/>
<path d="M771.9 411 V392 L1068.9 433.6 V615.4 L1047.6 612.5" fill="none" stroke="#1a1aee" stroke-width="1.2"/>
<text transform="translate(999.5 444.5) skewY(8)" font-family="Liberation Serif,Noto Serif CJK SC,serif" font-size="20" letter-spacing="2.4" fill="#1a1aee" stroke="#1a1aee" stroke-width=".35">Plane7</text>
<g stroke="#1a1aee" fill="#1a1aee" stroke-width="1"><path d="M740.5 603.5V578M740.500 603.500h8M736 599l9 9M745 599l-9 9M735 603.500h5"/><path d="M740.500 573l-2.500 7h5zM752 603.500l-6-2.500v5z" stroke="none"/></g>
<g stroke="#409c9a" stroke-width="1.1" fill="none">
<circle r="60.2" transform="translate(618.6 286.7) skewY(8)"/>
<path d="M558.7 278.3L678.5 295.2"/>
<path d="M664.6 332.2L764 435.5"/>
<path d="M730 392.4L797.8 470.9" stroke-width="2.2"/>
<path d="M730 461.6L798.4 402" stroke-width="2.2"/>
<polygon points="802.2,266.1 871.4,275.4 871.4,346.4 802.2,336.5"/>
<path d="M836.8 341.5L836.8 403"/>
<polygon points="1010,240.3 1186.3,265.4 1186.3,334.9 1010,310.5"/>
<path d="M1094.8 252.3L1094.8 322.5"/>
<polygon points="1036.7,261.5 1087.5,268.6 1068.6,301.3 1017.3,294.3"/>
<path d="M1010 275.4L920.6 263.3V416"/>
<path d="M740 618.4L740 748"/>
<path d="M806 596L806 848.4"/>
<path d="M968.4 619L968.4 870.8"/>
<path d="M1009 655.5L1009 786.4"/>
<path d="M674 704.4L740 713.1"/>
<path d="M1009 752.4L1075 761"/>
<path d="M740 804.1L805.5 813.5"/>
<path d="M968.4 836.7L1033.8 845.5"/>
<polygon points="788.3,782.9 952.7,805.3 952.7,862.3 788.3,839.9"/>
<path d="M1091 588.5L1220.1 607.1"/>
<path d="M1023.1 643.5L1152 661.3"/>
<path d="M1213.6 579.8L1185.3 602.1"/>
<path d="M1089.7 678.3L1118 656.6"/>
<path d="M914 586.5L1164.3 780L1232.4 789.6"/>
<circle cx="1260.9" cy="794.6" r="15.6"/>
<path d="M1251.5 815.5L1269.4 772.7"/>
<polygon points="1289.2,769.2 1402.6,785.2 1402.6,841.9 1289.2,826.3"/>
<path d="M1424.1 800.5L1459.9 805.5"/>
<path d="M1442 803L1442 838.8"/>
<path d="M1428.2 815L1442 838.8L1456 819.6"/>
<polygon points="1472,795.2 1547.5,806.1 1547.5,862.4 1472,851.9"/>
</g>
<polygon points="836.8,402.5 819,434 854,438.9" fill="#409c9a"/>
<polygon points="920.6,450.6 915.4,415.3 925.9,415.3" fill="#409c9a"/>
<polygon points="740.0,713.1 704.9,714.4 706.5,702.8" fill="#409c9a"/>
<polygon points="1009.0,752.4 1044.2,751.1 1042.6,762.7" fill="#409c9a"/>
<polygon points="805.5,813.5 770.6,814.5 772.2,803.1" fill="#409c9a"/>
<polygon points="968.4,836.7 1003.5,835.6 1001.9,847.0" fill="#409c9a"/>
<polygon points="1185.3,602.1 1200.7,584.3 1206.3,591.3" fill="#409c9a"/>
<polygon points="1118.0,656.6 1102.8,674.2 1097.2,667.0" fill="#409c9a"/>
<polygon points="913.8,586.3 947.8,602.4 941.0,612.2" fill="#409c9a"/>
<text transform="translate(589 330) skewY(8) scale(0.9 1)" font-family="Liberation Sans,sans-serif" font-size="44" font-weight="700" fill="#409c9a" >A1</text>
<text transform="translate(820.5 321.5) skewY(8) scale(1.16 1)" font-family="Liberation Sans,sans-serif" font-size="43" font-weight="300" fill="#409c9a" style="font-family:'Noto Sans CJK SC',sans-serif" stroke="#409c9a" stroke-width=".5">A</text>
<text transform="translate(1107.5 305) skewY(8) scale(1.22 1)" font-family="Liberation Sans,sans-serif" font-size="39" font-weight="300" fill="#409c9a" style="font-family:'Noto Sans CJK SC',sans-serif" stroke="#409c9a" stroke-width=".45">0.5</text>
<text transform="translate(792 740) skewY(8)" font-family="Liberation Sans,sans-serif" font-size="45" font-weight="700" fill="#409c9a" >50±0.25</text>
<text transform="translate(801 831) skewY(8)" font-family="Liberation Sans,sans-serif" font-size="45" font-weight="700" fill="#409c9a" >30.109</text>
<text transform="translate(1303 821) skewY(8) scale(0.97 1)" font-family="Liberation Sans,sans-serif" font-size="45" font-weight="700" fill="#409c9a" >7.26</text>
<text transform="translate(1487 843.5) skewY(8) scale(0.95 1)" font-family="Liberation Sans,sans-serif" font-size="45" font-weight="700" fill="#409c9a" >16</text>
<text transform="matrix(1 .114 .5 -.37 1061 626.5) scale(1 -1)" font-family="Liberation Sans,sans-serif" font-size="44.5" font-weight="700" fill="#409c9a">30±0.25</text>
<rect x="542.1" y="204.0" width="154.0" height="170.0" rx="18" ry="18" fill="none" stroke="#fa4242" stroke-width="4" pathLength="608" stroke-dasharray="12 4 4 4 4 4" stroke-dashoffset="0" filter="url(#glow)"/>
<rect x="780.2" y="242.1" width="113.8" height="123.1" rx="18" ry="18" fill="none" stroke="#fa4242" stroke-width="4" pathLength="448" stroke-dasharray="12 4 4 4 4 4" stroke-dashoffset="-3" filter="url(#glow)"/>
<rect x="911.0" y="214.1" width="296.6" height="135.6" rx="18" ry="18" fill="none" stroke="#fa4242" stroke-width="4" pathLength="832" stroke-dasharray="12 4 4 4 4 4" stroke-dashoffset="-2.5" filter="url(#glow)"/>
<rect x="1222.2" y="745.5" width="352.0" height="121.7" rx="18" ry="18" fill="none" stroke="#fa4242" stroke-width="4" pathLength="928" stroke-dasharray="12 4 4 4 4 4" stroke-dashoffset="-4" filter="url(#glow)"/>
<text transform="translate(1318 903) rotate(-2.5) skewX(-14)" style="font-family:'Noto Sans CJK SC',sans-serif;font-weight:300" font-size="29" textLength="156" lengthAdjust="spacingAndGlyphs" fill="#0a0a0a">SENSNOW</text>
<text transform="translate(1503 896) rotate(-2.5) skewX(-14)" style="font-family:'Noto Sans CJK SC',sans-serif;font-weight:300" font-size="29" textLength="166" lengthAdjust="spacingAndGlyphs" fill="#0a0a0a">SOFTWARE</text>
<text transform="translate(1316 948) rotate(-1.5) skewX(-14)" style="font-family:'Noto Sans CJK SC',sans-serif;font-weight:300" font-size="29" textLength="164" lengthAdjust="spacingAndGlyphs" fill="#0a0a0a">PRINCIPAL</text>
<text transform="translate(1503 943) rotate(-1.5) skewX(-14)" style="font-family:'Noto Sans CJK SC',sans-serif;font-weight:300" font-size="29" textLength="240" lengthAdjust="spacingAndGlyphs" fill="#0a0a0a">INVESTIGATOR</text>
<text transform="translate(1760 936) rotate(-1.5) skewX(-14)" style="font-family:'Noto Sans CJK SC',sans-serif;font-weight:300" font-size="29" textLength="10" lengthAdjust="spacingAndGlyphs" fill="#0a0a0a">/</text>
<text transform="translate(1786 935) rotate(-1.5) skewX(-14)" style="font-family:'Noto Sans CJK SC',sans-serif;font-weight:300" font-size="29" textLength="72" lengthAdjust="spacingAndGlyphs" fill="#0a0a0a">JOE.</text>
<g><path d="M270 942V915" stroke="#0e7a1a" stroke-width="2.4"/><path d="M270 911l-4 7h8z" fill="#0e7a1a"/>
<path d="M270 941l22 2.500" stroke="#d01c1c" stroke-width="2.400"/><path d="M298 943l-8-3.500v7z" fill="#d01c1c"/>
<path d="M270 941l-9 6" stroke="#1a1acc" stroke-width="3.500"/><path d="M256 950l8-6 2 5z" fill="#1a1acc"/>
<text x="267" y="906" font-family="Liberation Sans,sans-serif" font-size="8" fill="#0e7a1a">Y</text><text x="300" y="946" font-family="Liberation Sans,sans-serif" font-size="8" fill="#d01c1c">X</text><text x="253" y="951" font-family="Liberation Sans,sans-serif" font-size="7" fill="#1a1acc">Z</text></g>
<g>
<g transform="translate(751 132)"><circle cx="1.500" cy="-1.500" r="5.500" fill="#d4e6f0" fill-opacity=".55" stroke="#2f5f7c" stroke-width="1.300"/><path d="M-2.500 2.500l-5.500 5.500" stroke="#2f5f7c" stroke-width="2.200"/><path d="M1.500 -4.500v6M-1.500 -1.500h6" stroke="#2f5f7c" stroke-width="1"/></g>
<g transform="translate(777 132)" fill="none" stroke="#2f5f7c" stroke-width="1.300"><path d="M0 -8v16M-8 0h16M0 -8l-2.500 3M0 -8l2.500 3M0 8l-2.500 -3M0 8l2.500 -3M-8 0l3 -2.500M-8 0l3 2.500M8 0l-3 -2.500M8 0l-3 2.500"/></g>
<g transform="translate(804 132)"><circle cx="1.500" cy="-1.500" r="5.500" fill="#d4e6f0" fill-opacity=".55" stroke="#2f5f7c" stroke-width="1.300"/><path d="M-2.500 2.500l-5.500 5.500" stroke="#2f5f7c" stroke-width="2.200"/></g><path d="M795 124v15M795 124l-2 3M795 124l2 3M795 139l-2 -3M795 139l2 -3" stroke="#173e58" stroke-width="1.100" fill="none"/>
<g transform="translate(830 133)"><circle cx="1.500" cy="-1.500" r="5.500" fill="#d4e6f0" fill-opacity=".55" stroke="#2f5f7c" stroke-width="1.300"/><path d="M-2.500 2.500l-5.500 5.500" stroke="#2f5f7c" stroke-width="2.200"/></g><rect x="823" y="124" width="14" height="12" fill="none" stroke="#2f5f7c" stroke-width="1" stroke-dasharray="3 2"/>
<g opacity=".35"><g transform="translate(853 132)"><circle cx="1.500" cy="-1.500" r="5.500" fill="#d4e6f0" fill-opacity=".55" stroke="#2f5f7c" stroke-width="1.300"/><path d="M-2.500 2.500l-5.500 5.500" stroke="#2f5f7c" stroke-width="2.200"/></g><circle cx="860" cy="130" r="4" fill="none" stroke="#2f5f7c"/></g>
<g transform="translate(881 132)"><g transform="rotate(-42)"><path d="M-10 -3.800L-6 -3.800L-5 -2.800L8 -2.200L8 2.200L-5 2.800L-6 3.800L-10 3.800z" fill="#d3d8dc" stroke="#4c5860" stroke-width="1"/><path d="M-6 -3.800v7.600M1 -2.500v5" stroke="#4c5860" stroke-width=".8"/><ellipse cx="-10" cy="0" rx="1.300" ry="3.800" fill="#9aa4aa" stroke="#4c5860" stroke-width=".8"/></g><path d="M-1 6.500l4.500-3.500v2.300h5v2.400h-5v2.300z" fill="#1f6f9f"/></g>
<g transform="translate(907 132)" fill="none" stroke="#2f5f7c" stroke-width="1.500"><path d="M5.500 -5a7.500 7.500 0 1 0 2 6"/><path d="M8 -9v5h-5" /></g>
<g transform="translate(932 132)" fill="none" stroke="#173e58" stroke-width="1.300"><path d="M0 -9v15M0 -9l-2.500 3.500M0 -9l2.500 3.500M-8 5l8 3 8-3-8-3z"/></g>
<g transform="translate(959 132)"><path d="M-9 -1a9 6 0 0 1 18 0v8h-5v-7.500a4 2.500 0 0 0-8 0v7.500h-5z" fill="#9fb3bf" stroke="#173e58" stroke-width="1"/><path d="M-9 0h5v8h-5zM4 0h5v8h-5z" fill="#6fa6c6" stroke="#173e58" stroke-width=".8"/><path d="M-9 3l4-3M-9 6l5-4M-8 8l4-3M4 3l4-3M4 6l5-4M5 8l4-3" stroke="#173e58" stroke-width=".7"/><path d="M-4 -.5a4 2.500 0 0 1 8 0v7a4 2.500 0 0 0-8 0z" fill="#cfdbe2" stroke="#173e58" stroke-width=".7"/></g>
<g transform="translate(985 132)" fill="#5fa3cc" stroke="#173e58" stroke-width="1"><path d="M-8 -4l5-5h11v12l-5 5h-11z" fill="#dbe9f1"/><path d="M-8 -4h11v12h-11z"/><path d="M3 -4l5-5"/></g>
<path d="M1001 131h6l-3 3.500z" fill="#5a7f95"/>
<g transform="translate(1025 132)" stroke="#173e58" stroke-width="1"><path d="M-7 -5l7-3 7 3v11l-7 3-7-3z" fill="#e4eff5"/><path d="M0 -2v11l7-3v-11z" fill="#4e97c4"/><path d="M-7 -5l7 3 7-3" fill="none"/></g>
<path d="M1041 131h6l-3 3.500z" fill="#5a7f95"/>
<g transform="translate(1065 132)" stroke="#44687d" stroke-width="1" ><path d="M-8 -4l5-5h11v12l-5 5h-11z" fill="none"/><path d="M-8 -4h11v12h-11z" fill="none"/><path d="M-8 -4l5-5h11l-5 5z" fill="none"/></g>
<g transform="translate(1091 132)" stroke="#58788c" stroke-width="1" ><path d="M-8 -4l5-5h11v12l-5 5h-11z" fill="#b8d0de"/><path d="M-8 -4h11v12h-11z" fill="#c9dde9"/><path d="M-8 -4l5-5h11l-5 5z" fill="#dbe9f1"/></g>
<g transform="translate(1116 132)" stroke="#4f9ac8" stroke-width="1" ><path d="M-8 -4l5-5h11v12l-5 5h-11z" fill="#3d8dbd"/><path d="M-8 -4h11v12h-11z" fill="#5fa8d4"/><path d="M-8 -4l5-5h11l-5 5z" fill="#8cc4e4"/></g>
<rect x="1130" y="119" width="26" height="26" fill="#4f86a4" stroke="#2c4d60" stroke-width="1"/>
<g transform="translate(1143 132)" stroke="#0c2230" stroke-width="1" ><path d="M-8 -4l5-5h11v12l-5 5h-11z" fill="#3d8dbd"/><path d="M-8 -4h11v12h-11z" fill="#5fa8d4"/><path d="M-8 -4l5-5h11l-5 5z" fill="#9bcdea"/></g>
<g transform="translate(1169 132)"><path d="M-9 0c3-5 6-7 9-7s6 2 9 7c-3 5-6 7-9 7s-6-2-9-7z" fill="#b4cbd8" stroke="#56768a"/><circle r="3.500" fill="#3a4a55"/><path d="M0 -8v16" stroke="#3a4a55" stroke-width="1.500"/></g>
<path d="M1185 131h6l-3 3.500z" fill="#5a7f95"/>
<g transform="translate(1207 130)"><circle r="8" fill="#e8b81a"/><path d="M0 0H-8A8 8 0 0 1 0 -8z" fill="#3a78d0"/><path d="M0 0V-8A8 8 0 0 1 8 0z" fill="#d02a1a"/><path d="M0 0H-8A8 8 0 0 0 -2 7.7z" fill="#32a83a"/></g><path d="M1209 141l7-9 3 2-7 9-3 1z" fill="#e8b060" stroke="#5a4a20" stroke-width=".8"/>
<g transform="translate(1234 129)"><circle r="8" fill="#e8b81a"/><path d="M0 0H-8A8 8 0 0 1 0 -8z" fill="#3a78d0"/><path d="M0 0V-8A8 8 0 0 1 8 0z" fill="#d02a1a"/><path d="M0 0H-8A8 8 0 0 0 -2 7.7z" fill="#32a83a"/></g><path d="M1224 134h20v8h-20z" fill="#222"/><path d="M1224 134h5v4h-5zM1234 134h5v4h-5zM1229 138h5v4h-5zM1239 138h5v4h-5z" fill="#eee"/>
<path d="M1251 131h6l-3 3.500z" fill="#5a7f95"/>
<g transform="translate(1275 132)"><rect x="-9" y="-7" width="18" height="11" fill="#c7dbe6" stroke="#2f4f62" stroke-width="1.200"/><path d="M0 4v4M-4 8h8" stroke="#2f4f62" stroke-width="1.300"/></g>
<path d="M1290 131h6l-3 3.500z" fill="#5a7f95"/>
<defs><radialGradient id="sph" cx=".35" cy=".3" r=".8"><stop offset="0" stop-color="#fff"/><stop offset=".5" stop-color="#5fa8d4"/><stop offset="1" stop-color="#1f5f8a"/></radialGradient></defs><circle cx="1315" cy="132" r="8" fill="url(#sph)"/>
<g transform="translate(1340 132)" stroke="#3a4248" stroke-width="1" ><path d="M-8 -4l5-5h11v12l-5 5h-11z" fill="#8f969b"/><path d="M-8 -4h11v12h-11z" fill="#b9bec2"/><path d="M-8 -4l5-5h11l-5 5z" fill="#dfe3e6"/></g>
<circle cx="1367" cy="132" r="8" fill="#c8ccd0" stroke="#6a7278"/><circle cx="1369" cy="133" r="4" fill="#5a6268"/>
<rect x="1381" y="119" width="26" height="26" fill="#4f86a4" stroke="#2c4d60" stroke-width="1"/>
<g transform="translate(1392 132)" stroke="#3a4248" stroke-width="1" ><path d="M-8 -4l5-5h11v12l-5 5h-11z" fill="#a6adb2"/><path d="M-8 -4h11v12h-11z" fill="#c9ced2"/><path d="M-8 -4l5-5h11l-5 5z" fill="#e4e7ea"/></g><path d="M1403 122l-8 8h4l-5 6 10-8h-4z" fill="#f7a21a" stroke="#d4411a" stroke-width=".8"/>
<g fill="none" stroke="#5d8ba4" stroke-width="1.200"><rect x="1790.500" y="125.500" width="11" height="13"/><path d="M1796 129.500v5l-3.500-2.500z" fill="#5d8ba4"/><rect x="1816.500" y="125.500" width="11" height="13"/><path d="M1822 129.500v5l3.500-2.500z" fill="#5d8ba4"/><path d="M1843 137h10" stroke-width="2"/><rect x="1871.500" y="126.500" width="9" height="7"/><rect x="1867.500" y="130.500" width="9" height="7" fill="#6aaaca"/><path d="M1895 127l10 10M1905 127l-10 10"/></g>
</g>
<g>
<rect x="1895" y="168" width="24" height="168" fill="#dcdcdc" stroke="#8f8f8f"/>
<rect x="1895.5" y="168.5" width="24" height="23" fill="#fbfbfb"/>
<path d="M1895 191.5h24" stroke="#a0a0a0"/>
<path d="M1895 215.5h24" stroke="#a0a0a0"/>
<path d="M1895 239.5h24" stroke="#a0a0a0"/>
<path d="M1895 263.5h24" stroke="#a0a0a0"/>
<path d="M1895 287.5h24" stroke="#a0a0a0"/>
<path d="M1895 311.5h24" stroke="#a0a0a0"/>
<g transform="translate(1907 180)"><path d="M-8.500 0L0 -8L8.500 0" fill="none" stroke="#1d5f8a" stroke-width="2"/><path d="M-6 0v8h12v-8" fill="#fff" stroke="#333" stroke-width="1.200"/><rect x="-1.500" y="2.500" width="3.500" height="5.500" fill="none" stroke="#333"/></g>
<g transform="translate(1907 204)" fill="#e8e8e8" stroke="#333" stroke-width="1"><path d="M-6 -5l4-3v14l-4 3zM-2 -8l4 0v14l-4 0zM2 -8l4 2v14l-4-2z"/></g>
<g transform="translate(1907 228)" fill="#f0f0f0" stroke="#444" stroke-width="1"><path d="M-9 7v-13h6l1.500 2h7v3"/><path d="M-9 7l4-9h15l-4 9z"/></g>
<g transform="translate(1907 252)"><rect x="-8" y="-8" width="16" height="16" rx="2" fill="#f4f4f4" stroke="#333"/><path d="M-5 -5h7v3h-2v4h3v3h-9v-3h3v-4h-2z" fill="#f2c21a" stroke="#8a6a10" stroke-width=".7"/><rect x="4" y="-5" width="3" height="3" fill="#f2c21a" stroke="#8a6a10" stroke-width=".6"/><rect x="4" y="1" width="3" height="6" fill="#aaa" stroke="#555" stroke-width=".6"/></g>
<g transform="translate(1907 276)"><circle r="8" fill="#e8b81a"/><path d="M0 0H-8A8 8 0 0 1 0 -8z" fill="#3a78d0"/><path d="M0 0V-8A8 8 0 0 1 8 0z" fill="#d02a1a"/><path d="M0 0H-8A8 8 0 0 0 -2 7.7z" fill="#32a83a"/></g>
<g transform="translate(1907 300)"><rect x="-8" y="-8" width="16" height="16" fill="#fbfbfb" stroke="#14405e" stroke-width="1.100"/><rect x="-8" y="-8" width="16" height="3" fill="#3d8dbd"/><g fill="#3d8dbd"><rect x="-6" y="-3" width="3" height="2"/><rect x="-6" y="1" width="3" height="2"/><rect x="-6" y="5" width="3" height="2"/></g><path d="M-1.500 -2h7M-1.500 2h7M-1.500 6h7" stroke="#333" stroke-width="1"/></g>
<g transform="translate(1907 324)"><path d="M-1 -2h9v8h-4l-3 3v-3h-2z" fill="#f0f0f0" stroke="#444"/><path d="M-9 -8h12v8h-6l-3 3v-3h-3z" fill="#4e97c4" stroke="#14405e"/></g>
</g>
</svg>
<div class="wm" style="left:386px;top:-24px"><b>Senshow</b><i>新思诺软件</i></div>
<div class="wm" style="left:1051px;top:-21px"><b>Senshow</b><i>新思诺软件</i></div>
<div class="wm" style="left:1618px;top:-18px"><b>Senshow</b><i>新思诺软件</i></div>
<div class="wm" style="left:69px;top:183px"><b>Senshow</b><i>新思诺软件</i></div>
<div class="wm" style="left:713px;top:179px"><b>Senshow</b><i>新思诺软件</i></div>
<div class="wm" style="left:1286px;top:179px"><b>Senshow</b><i>新思诺软件</i></div>
<div class="wm" style="left:336px;top:351px"><b>Senshow</b><i>新思诺软件</i></div>
<div class="wm" style="left:988px;top:354px"><b>Senshow</b><i>新思诺软件</i></div>
<div class="wm" style="left:1558px;top:354px"><b>Senshow</b><i>新思诺软件</i></div>
<div class="wm" style="left:6px;top:559px"><b>Senshow</b><i>新思诺软件</i></div>
<div class="wm" style="left:658px;top:559px"><b>Senshow</b><i>新思诺软件</i></div>
<div class="wm" style="left:1228px;top:559px"><b>Senshow</b><i>新思诺软件</i></div>
<div class="wm" style="left:313px;top:699px"><b>Senshow</b><i>新思诺软件</i></div>
<div class="wm" style="left:971px;top:699px"><b>Senshow</b><i>新思诺软件</i></div>
<div class="wm" style="left:1538px;top:699px"><b>Senshow</b><i>新思诺软件</i></div>
<div class="wm" style="left:-12px;top:896px"><b>Senshow</b><i>新思诺软件</i></div>
<div class="wm" style="left:641px;top:896px"><b>Senshow</b><i>新思诺软件</i></div>
<div class="wm" style="left:1211px;top:896px"><b>Senshow</b><i>新思诺软件</i></div>
<div class="wm" style="left:1813px;top:809px"><b>Senshow</b><i>新思诺软件</i></div>
<div class="wm" style="left:258px;top:1004px"><b>Senshow</b><i>新思诺软件</i></div>
<div class="wm" style="left:926px;top:1009px"><b>Senshow</b><i>新思诺软件</i></div>
<div class="wm" style="left:1481px;top:999px"><b>Senshow</b><i>新思诺软件</i></div>
<svg class="abs" style="left:0;top:0" width="1919" height="1031" viewBox="0 0 1919 1031">
<path d="M1278.7 434.9 H1679.7 Q1688.7 434.9 1688.4 443.9 L1683.7 584.1 Q1683.4 593.1 1674.4 593.1 H1284.2 Q1275.2 593.1 1274.9 584.1 L1270.0 443.9 Q1269.7 434.9 1278.7 434.9 Z" fill="#fd4242" filter="url(#shadow)"/>
<text x="1308" y="496.5" style="font-family:'Noto Sans CJK SC','Liberation Sans',sans-serif" font-size="31.7" fill="#fff" xml:space="preserve">这些 3D PMI 无法按照用</text>
<text x="1303" y="555.5" style="font-family:'Noto Sans CJK SC','Liberation Sans',sans-serif" font-size="31.7" fill="#fff">户所选来对齐依附平面<tspan dx="5">！</tspan></text>
</svg>
</body></html>
